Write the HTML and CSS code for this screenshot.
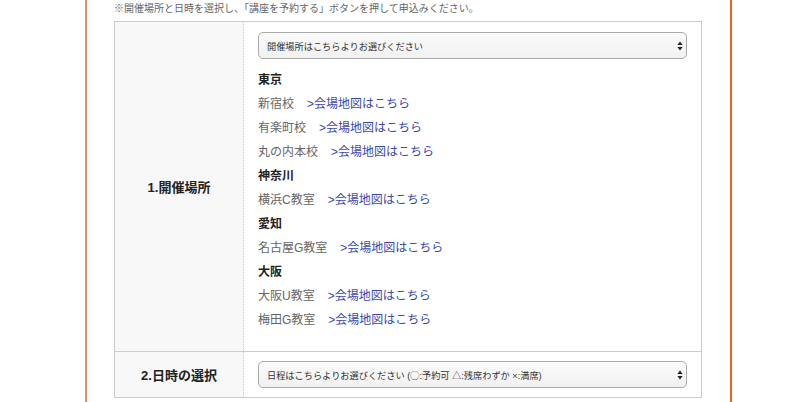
FILE: index.html
```html
<!DOCTYPE html>
<html lang="ja">
<head>
<meta charset="utf-8">
<title>講座予約</title>
<link rel="stylesheet" href="styles.css">
</head>
<body>
<div class="frame">
  <p class="note">※開催場所と日時を選択し、「講座を予約する」ボタンを押して申込みください。</p>
  <table class="form">
    <tr class="row-place">
      <th>1.開催場所</th>
      <td>
        <div class="select">
          <span>開催場所はこちらよりお選びください</span>
          <svg class="arrows" width="6" height="10" viewBox="0 0 6 10"><path d="M3 0.5 L5.6 4 H0.4 Z M3 9.5 L5.6 6 H0.4 Z" fill="#222"/></svg>
        </div>
        <ul class="venues">
          <li class="area">東京</li>
          <li class="venue"><span class="name">新宿校</span><a href="#">&gt;会場地図はこちら</a></li>
          <li class="venue"><span class="name">有楽町校</span><a href="#">&gt;会場地図はこちら</a></li>
          <li class="venue"><span class="name">丸の内本校</span><a href="#">&gt;会場地図はこちら</a></li>
          <li class="area">神奈川</li>
          <li class="venue"><span class="name">横浜C教室</span><a href="#">&gt;会場地図はこちら</a></li>
          <li class="area">愛知</li>
          <li class="venue"><span class="name">名古屋G教室</span><a href="#">&gt;会場地図はこちら</a></li>
          <li class="area">大阪</li>
          <li class="venue"><span class="name">大阪U教室</span><a href="#">&gt;会場地図はこちら</a></li>
          <li class="venue"><span class="name">梅田G教室</span><a href="#">&gt;会場地図はこちら</a></li>
        </ul>
      </td>
    </tr>
    <tr class="row-date">
      <th>2.日時の選択</th>
      <td>
        <div class="select">
          <span>日程はこちらよりお選びください (◯:予約可 △:残席わずか ×:満席)</span>
          <svg class="arrows" width="6" height="10" viewBox="0 0 6 10"><path d="M3 0.5 L5.6 4 H0.4 Z M3 9.5 L5.6 6 H0.4 Z" fill="#222"/></svg>
        </div>
      </td>
    </tr>
  </table>
</div>
</body>
</html>
```
FILE: styles.css
```css
html, body {
  margin: 0;
  padding: 0;
  background: #fff;
}
body {
  font-family: "Liberation Sans", "Noto Sans CJK JP", sans-serif;
  color: #333;
  height: 402px;
  overflow: hidden;
}
.frame {
  margin-left: 85px;
  width: 588px;
  min-height: 402px;
  border-left: 2px solid #e98c6c;
  border-right: 2px solid #e8661a;
  padding: 0 28px 0 27px;
  box-sizing: content-box;
}
.note {
  margin: 0 0 3px;
  font-size: 10px;
  line-height: 18px;
  color: #666;
  white-space: nowrap;
}
.form {
  width: 588px;
  border-collapse: collapse;
  border: 1px solid #ccc;
}
.form th {
  width: 128px;
  background: #f8f8f8;
  font-size: 13px;
  font-weight: bold;
  color: #222;
  text-align: center;
  vertical-align: middle;
  border-right: 1px dotted #ccc;
  padding: 0;
}
.form td {
  background: #fff;
  padding: 10px 14px 0 14px;
  vertical-align: top;
}
.row-date th, .row-date td {
  border-top: 1px solid #ccc;
}
.row-place td {
  height: 330px;
  box-sizing: border-box;
}
.row-date td {
  padding: 9px 14px 9px 14px;
}
.select {
  position: relative;
  height: 27px;
  box-sizing: border-box;
  border: 1px solid #aaa;
  border-radius: 5px;
  background: linear-gradient(#fbfbfb, #f1f1f1);
  display: flex;
  align-items: center;
  padding: 0 20px 0 8px;
  font-size: 9.2px;
  color: #333;
  white-space: nowrap;
}
.arrows {
  position: absolute;
  right: 3px;
  top: 8px;
}
.venues {
  list-style: none;
  margin: 9px 0 0;
  padding: 0;
  font-size: 12px;
  line-height: 24px;
}
.area {
  font-weight: bold;
  color: #222;
}
.venue .name {
  color: #666;
  margin-right: 13px;
}
.venue a {
  color: #3a47ad;
  text-decoration: none;
}
```
